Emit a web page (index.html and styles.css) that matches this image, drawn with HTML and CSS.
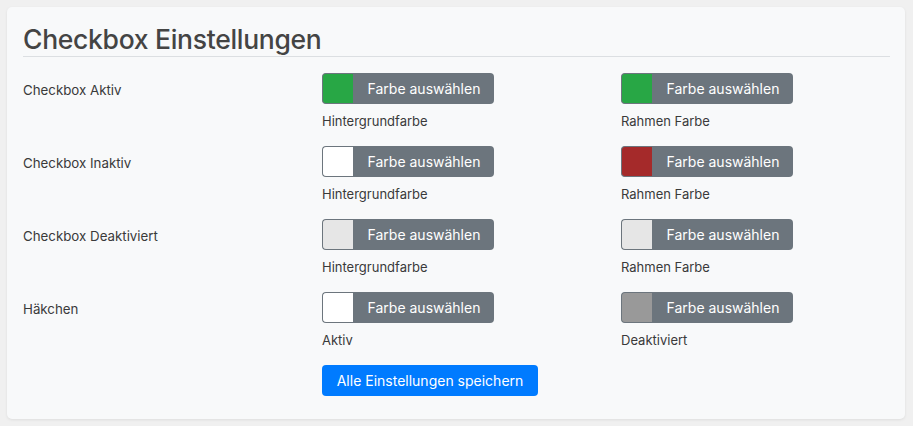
FILE: index.html
```html
<!DOCTYPE html>
<html lang="de">
<head>
    <meta charset="UTF-8">
    <meta name="viewport" content="width=device-width, initial-scale=1.0">
    <title>Checkbox Einstellungen</title>
    <link rel="stylesheet" href="styles.css">
</head>
<body>
    <div class="card">
        <h2 class="title">Checkbox Einstellungen</h2>

        <div class="settings">
            <div class="label">Checkbox Aktiv</div>
            <div class="field">
                <div class="picker">
                    <span class="swatch swatch-green"></span>
                    <button class="pick-btn">Farbe auswählen</button>
                </div>
                <div class="caption">Hintergrundfarbe</div>
            </div>
            <div class="field">
                <div class="picker">
                    <span class="swatch swatch-green"></span>
                    <button class="pick-btn">Farbe auswählen</button>
                </div>
                <div class="caption">Rahmen Farbe</div>
            </div>

            <div class="label">Checkbox Inaktiv</div>
            <div class="field">
                <div class="picker">
                    <span class="swatch swatch-white"></span>
                    <button class="pick-btn">Farbe auswählen</button>
                </div>
                <div class="caption">Hintergrundfarbe</div>
            </div>
            <div class="field">
                <div class="picker">
                    <span class="swatch swatch-red"></span>
                    <button class="pick-btn">Farbe auswählen</button>
                </div>
                <div class="caption">Rahmen Farbe</div>
            </div>

            <div class="label">Checkbox Deaktiviert</div>
            <div class="field">
                <div class="picker">
                    <span class="swatch swatch-light"></span>
                    <button class="pick-btn">Farbe auswählen</button>
                </div>
                <div class="caption">Hintergrundfarbe</div>
            </div>
            <div class="field">
                <div class="picker">
                    <span class="swatch swatch-light"></span>
                    <button class="pick-btn">Farbe auswählen</button>
                </div>
                <div class="caption">Rahmen Farbe</div>
            </div>

            <div class="label">Häkchen</div>
            <div class="field">
                <div class="picker">
                    <span class="swatch swatch-white"></span>
                    <button class="pick-btn">Farbe auswählen</button>
                </div>
                <div class="caption">Aktiv</div>
            </div>
            <div class="field">
                <div class="picker">
                    <span class="swatch swatch-gray"></span>
                    <button class="pick-btn">Farbe auswählen</button>
                </div>
                <div class="caption">Deaktiviert</div>
            </div>

            <div class="label"></div>
            <div class="field last">
                <button class="save-btn">Alle Einstellungen speichern</button>
            </div>
        </div>
    </div>
</body>
</html>
```

FILE: styles.css
```css
body {
    font-family: Inter, "Liberation Sans", Arial, sans-serif;
    margin: 0;
    padding: 7px 8px 7px 7px;
    background-color: #f0f0f0;
    color: #3a3a3a;
}
.card {
    background-color: #f8f9fa;
    border-radius: 5px;
    box-shadow: 0 1px 3px rgba(0,0,0,0.08);
    padding: 15px 15px 23px 16px;
}
.title {
    font-size: 26.5px;
    font-weight: 500;
    line-height: 34px;
    color: #444;
    margin: 0 0 16px 0;
    border-bottom: 1px solid #dcdfe2;
    letter-spacing: -0.3px;
}
.settings {
    display: grid;
    grid-template-columns: 269px 269px 269px;
    column-gap: 30px;
}
.label {
    font-size: 13.3px;
    line-height: 31px;
    padding-top: 2px;
}
.field {
    margin-bottom: 15px;
}
.field.last {
    margin-bottom: 0;
}
.picker {
    display: flex;
    width: 172px;
    height: 31px;
}
.swatch {
    width: 31px;
    box-sizing: border-box;
    border: 1px solid #6c757d;
    border-right: none;
    border-radius: 4px 0 0 4px;
}
.swatch-green { background-color: #28a745; }
.swatch-white { background-color: #ffffff; }
.swatch-red { background-color: #a52a2a; }
.swatch-light { background-color: #e6e6e6; }
.swatch-gray { background-color: #999999; }
.pick-btn {
    flex: 1;
    background-color: #6c757d;
    color: white;
    border: none;
    border-radius: 0 4px 4px 0;
    font-family: inherit;
    font-size: 14px;
    font-weight: 400;
    cursor: pointer;
    padding: 0 0 0 1px;
}
.caption {
    font-size: 13px;
    line-height: 20px;
    margin-top: 7px;
}
.save-btn {
    width: 216px;
    height: 31px;
    background-color: #007bff;
    color: white;
    border: none;
    border-radius: 4px;
    font-family: inherit;
    font-size: 14px;
    font-weight: 400;
    cursor: pointer;
    padding: 0;
}
```
